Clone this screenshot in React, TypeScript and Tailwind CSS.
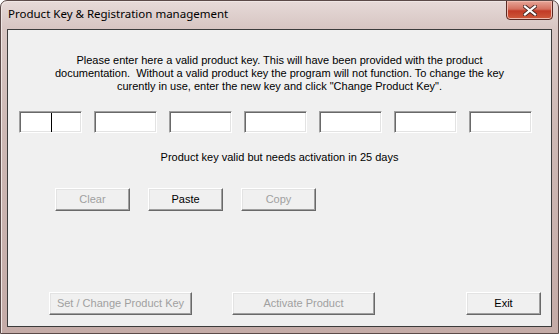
import React from "react";

const ui = { fontFamily: '"Liberation Sans", Arial, sans-serif' };

function KeyBox({ caret }: { caret?: boolean }) {
  return (
    <div className="relative h-[22px] w-[63px] border border-t-[#a0a0a0] border-l-[#a0a0a0] border-b-white border-r-white bg-white shadow-[inset_1px_1px_0_#696969,inset_-1px_-1px_0_#e3e3e3]">
      {caret && <div className="absolute left-[31px] top-[1px] h-[19px] w-px bg-black" />}
    </div>
  );
}

function Btn({
  label,
  disabled,
  className,
}: {
  label: string;
  disabled?: boolean;
  className: string;
}) {
  return (
    <div
      className={
        "flex h-[23px] items-center justify-center border border-t-white border-l-white border-b-[#696969] border-r-[#696969] bg-[#f0f0f0] text-[11px] shadow-[inset_-1px_-1px_0_#a0a0a0,inset_1px_1px_0_#e3e3e3] " +
        (disabled ? "text-[#a0a0a0] " : "text-black ") +
        className
      }
      style={ui}
    >
      {label}
    </div>
  );
}

export default function App() {
  return (
    <div className="h-[334px] w-[559px] overflow-hidden rounded-t-[7px] border border-[#5b4a48] bg-[linear-gradient(180deg,#e6dad8_0%,#d8c6c3_8%,#cdb8b4_40%,#c4aba7_100%)] shadow-[inset_1px_1px_0_#efe6e4]">
      {/* title bar */}
      <div className="relative flex h-[28px] items-start">
        <span
          className="pl-[7px] pt-[6px] text-[11.5px] leading-[14px] text-black"
          style={{ fontFamily: '"Noto Sans", "Open Sans", sans-serif' }}
        >
          Product Key &amp; Registration management
        </span>
        <div className="absolute right-[5px] top-[-1px] flex h-[20px] w-[47px] items-center justify-center rounded-b-[4px] border border-[#5a2a24] bg-[linear-gradient(180deg,#e7a698_0%,#d4705f_45%,#c23a26_55%,#cf5a3c_100%)] shadow-[inset_0_0_0_1px_#f0b8ac]">
          <svg width="14" height="11" viewBox="0 0 14 11">
            <path d="M2 1.5 L12 9.5 M12 1.5 L2 9.5" stroke="#4a2a26" strokeWidth="4" strokeLinecap="square" />
            <path d="M2 1.5 L12 9.5 M12 1.5 L2 9.5" stroke="#ffffff" strokeWidth="2.2" strokeLinecap="square" />
          </svg>
        </div>
      </div>

      {/* client area */}
      <div className="ml-[6px] flex h-[298px] w-[545px] flex-col border border-[#3c3c3c] bg-[#f0f0f0] text-black" style={ui}>
        <p className="mt-[24px] text-center text-[11px] leading-[13px]">
          Please enter here a valid product key. This will have been provided with the product
          <br />
          documentation.&nbsp; Without a valid product key the program will not function. To change the key
          <br />
          curently in use, enter the new key and click "Change Product Key".
        </p>

        <div className="ml-[11px] mt-[18px] flex gap-[12px]">
          <KeyBox caret />
          <KeyBox />
          <KeyBox />
          <KeyBox />
          <KeyBox />
          <KeyBox />
          <KeyBox />
        </div>

        <p className="mt-[18px] text-center text-[11px] leading-[13px]">
          Product key valid but needs activation in 25 days
        </p>

        <div className="ml-[47px] mt-[24px] flex gap-[18px]">
          <Btn label="Clear" disabled className="w-[75px]" />
          <Btn label="Paste" className="w-[75px]" />
          <Btn label="Copy" disabled className="w-[75px]" />
        </div>

        <div className="ml-[41px] mt-[81px] flex">
          <Btn label="Set / Change Product Key" disabled className="w-[143px]" />
          <Btn label="Activate Product" disabled className="ml-[40px] w-[143px]" />
          <Btn label="Exit" className="ml-[91px] w-[75px]" />
        </div>
      </div>
    </div>
  );
}
